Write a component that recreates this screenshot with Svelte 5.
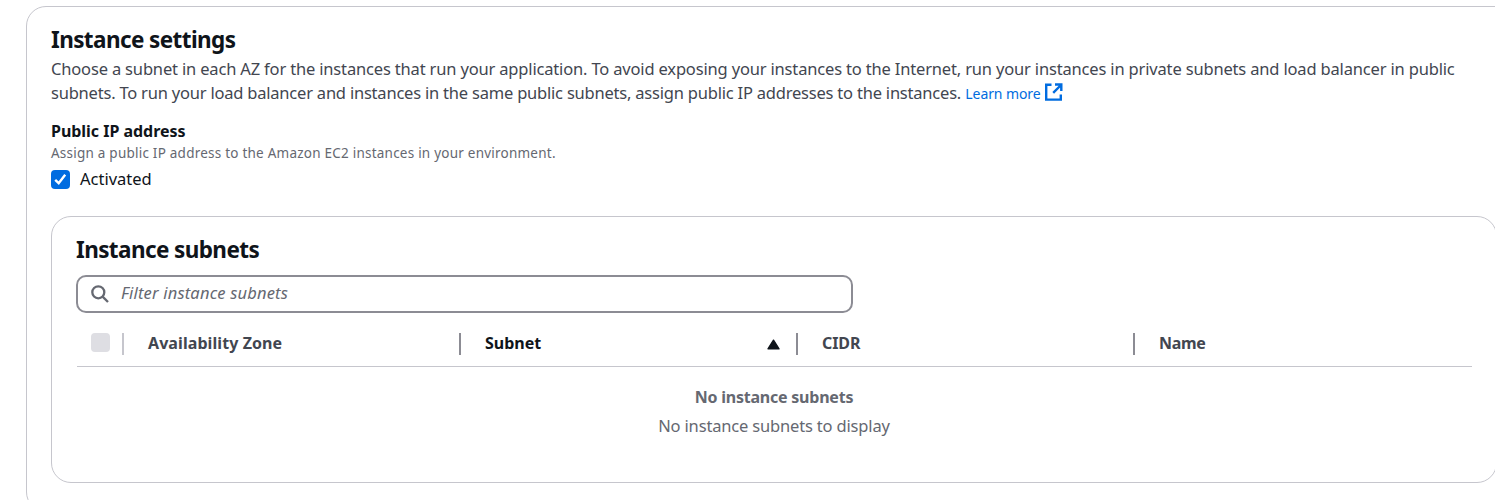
<script>
  const columns = ['Availability Zone', 'Subnet', 'CIDR', 'Name'];
  const tracking = [0.08, -0.02, -0.1, -0.35];
  let activated = $state(true);
</script>

<section class="settings">
  <h2>Instance settings</h2>
  <p class="description">
    <span class="l1">Choose a subnet in each AZ for the instances that run your application. To avoid exposing your instances to the Internet, run your instances in private subnets and load balancer in public</span><br />
    <span class="l2">subnets. To run your load balancer and instances in the same public subnets, assign public IP addresses to the instances.</span>
    <a href="#learn"><span class="more">Learn more</span><svg width="18" height="18" viewBox="0 0 18 18" fill="none" stroke="currentColor" stroke-width="2.4"><path d="M6.5 1.8H1.2v14.8h14.6V11.5M10 1.5h6.3V8M16 2 8.2 9.8" /></svg></a>
  </p>

  <div class="field">
    <div class="label">Public IP address</div>
    <div class="hint">Assign a public IP address to the Amazon EC2 instances in your environment.</div>
    <label class="toggle">
      <input type="checkbox" bind:checked={activated} />
      <span class="box" class:on={activated}>
        {#if activated}<svg width="19" height="19" viewBox="0 0 19 19" fill="none" stroke="#fff" stroke-width="2.4"><path d="m4.2 9.9 3.5 3.3 6.5-8.5" /></svg>{/if}
      </span>
      <span>Activated</span>
    </label>
  </div>

  <section class="subnets">
    <h2>Instance subnets</h2>
    <div class="filter">
      <svg width="18" height="18" viewBox="0 0 18 18" fill="none" stroke="#656871" stroke-width="2.3"><circle cx="7.3" cy="7.3" r="6" /><path d="m11.6 11.6 5.4 5.4" /></svg>
      <span>Filter instance subnets</span>
    </div>
    <div class="thead">
      <div class="select"><span class="box disabled"></span></div>
      {#each columns as name, i}
        <div class="th" class:sorted={i === 1}>
          <span style="letter-spacing: {tracking[i]}px">{name}</span>
          {#if i === 1}<svg width="13" height="11" viewBox="0 0 13 11" fill="#0f141a" stroke="#0f141a" stroke-width="1.4" stroke-linejoin="round"><path d="M6.5 1.2 12 9.8H1z" /></svg>{/if}
        </div>
      {/each}
    </div>
    <div class="empty">
      <b>No instance subnets</b>
      <p>No instance subnets to display</p>
    </div>
  </section>
</section>

<style>
  :global(body) { background: #fff; overflow: hidden; }
  * { box-sizing: border-box; }
  h2, p { margin: 0; }
  .settings { width: 1494px; height: 506px; margin: 6px 0 0 26px; padding: 18px 24px 0; border: 1px solid #c6c6cd; border-radius: 20px; font: 16.5px/24px 'Noto Sans', sans-serif; color: #0f141a; white-space: nowrap; }
  h2 { font-size: 22.5px; line-height: 30px; font-weight: 700; letter-spacing: -0.6px; }
  .description { height: 48px; margin-top: 2px; color: #424650; }
  .l1 { letter-spacing: -0.168px; }
  .l2 { letter-spacing: -0.21px; }
  a { color: #006ce0; text-decoration: none; font-size: 14px; line-height: 20px; }
  .more { letter-spacing: -0.1px; }
  a svg { margin-left: 5px; vertical-align: -2px; }
  .field { margin-top: 14px; }
  .label { font-size: 16px; font-weight: 700; line-height: 24px; letter-spacing: -0.03px; }
  .hint { font-size: 13.5px; line-height: 20px; color: #656871; letter-spacing: 0.23px; }
  .toggle { display: flex; align-items: center; gap: 10px; height: 26px; margin-top: 3px; }
  .toggle input { position: absolute; opacity: 0; }
  .box { width: 19px; height: 19px; border-radius: 4px; display: block; }
  .box.on { background: #006ce0; }
  .box.disabled { background: #dedee3; }
  .box svg { display: block; }
  .subnets { width: 1446px; height: 267px; margin-top: 24px; padding: 18px 24px 0; border: 1px solid #c6c6cd; border-radius: 20px; }
  .filter { display: flex; align-items: center; gap: 12px; width: 777px; height: 38px; margin-top: 10px; padding-left: 13px; border: 2px solid #8c8c94; border-radius: 10px; color: #656871; font-style: italic; }
  .filter span { letter-spacing: 0.18px; padding-bottom: 2px; }
  .thead { display: grid; grid-template-columns: 45px repeat(4, 337px); height: 54px; width: 1395px; margin-left: 1px; border-bottom: 1px solid #c6c6cd; overflow: hidden; }
  .select { display: flex; align-items: center; padding-left: 14px; height: 59px; }
  .th { display: flex; align-items: center; height: 60px; padding-right: 16px; font-size: 16px; font-weight: 700; color: #424650; }
  .th::before { content: ''; width: 2px; height: 22px; margin: 2px 24px 0 0; background: #8c8c94; }
  .th:nth-child(2)::before { background: #c6c6cd; }
  .th svg { margin: 2px 0 0 auto; }
  .sorted { color: #0f141a; }
  .empty { text-align: center; margin-top: 18px; color: #656871; letter-spacing: -0.17px; }
  .empty b { font-size: 16px; letter-spacing: -0.23px; }
  .empty p { margin-top: 5px; }
</style>
